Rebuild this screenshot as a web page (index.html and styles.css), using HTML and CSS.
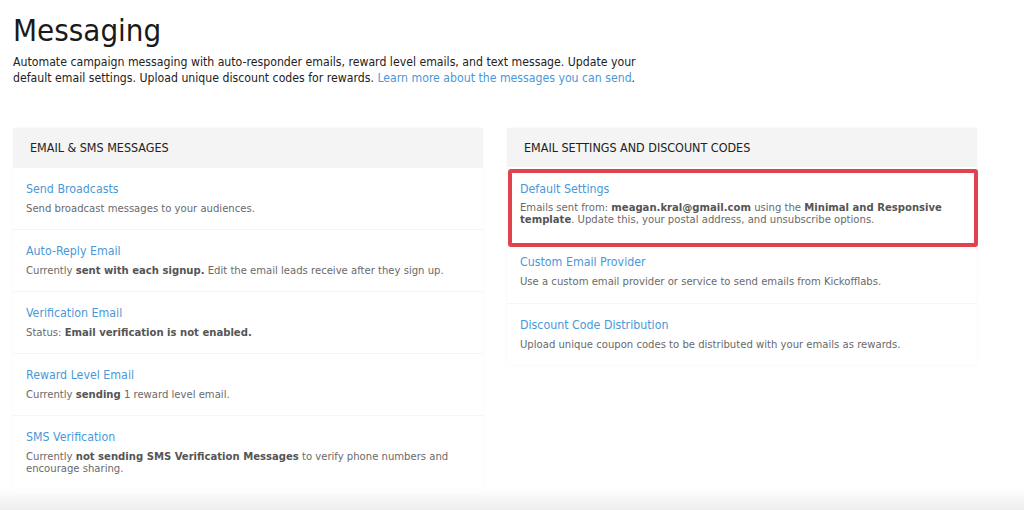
FILE: index.html
```html
<!DOCTYPE html>
<html lang="en">
<head>
   <meta charset="utf-8">
   <meta content="width=device-width, initial-scale=1.0" name="viewport">
   <title>Messaging</title>
   <link rel="stylesheet" href="styles.css">
</head>
<body>
   <div id="page">
      <h1 class="title">Messaging</h1>
      <p class="intro">
         Automate campaign messaging with auto-responder emails, reward level emails, and text message. Update your
         default email settings. Upload unique discount codes for rewards. <a href="#">Learn more about the messages you can send</a>.
      </p>

      <div class="panels">
         <div class="panel">
            <div class="panel-head">EMAIL &amp; SMS MESSAGES</div>
            <div class="item">
               <a href="#">Send Broadcasts</a>
               <p>Send broadcast messages to your audiences.</p>
            </div>
            <div class="item">
               <a href="#">Auto-Reply Email</a>
               <p>Currently <b>sent with each signup.</b> Edit the email leads receive after they sign up.</p>
            </div>
            <div class="item">
               <a href="#">Verification Email</a>
               <p>Status: <b>Email verification is not enabled.</b></p>
            </div>
            <div class="item">
               <a href="#">Reward Level Email</a>
               <p>Currently <b>sending</b> 1 reward level email.</p>
            </div>
            <div class="item">
               <a href="#">SMS Verification</a>
               <p>Currently <b>not sending SMS Verification Messages</b> to verify phone numbers and encourage sharing.</p>
            </div>
         </div>

         <div class="panel">
            <div class="panel-head">EMAIL SETTINGS AND DISCOUNT CODES</div>
            <div class="item highlight">
               <a href="#">Default Settings</a>
               <p>Emails sent from: <b>meagan.kral@gmail.com</b> using the <b>Minimal and Responsive template</b>. Update this, your postal address, and unsubscribe options.</p>
            </div>
            <div class="item">
               <a href="#">Custom Email Provider</a>
               <p>Use a custom email provider or service to send emails from Kickofflabs.</p>
            </div>
            <div class="item">
               <a href="#">Discount Code Distribution</a>
               <p>Upload unique coupon codes to be distributed with your emails as rewards.</p>
            </div>
         </div>
      </div>
   </div>
   <div class="fade"></div>
</body>
</html>
```

FILE: styles.css
```css
* {
    margin: 0;
    padding: 0;
    box-sizing: border-box;
}
body {
    font-family: "DejaVu Sans Condensed", "DejaVu Sans", Tahoma, sans-serif;
    font-stretch: condensed;
    color: #555;
    background: #fff;
    height: 510px;
    overflow: hidden;
}
a {
    color: #4a98d8;
    text-decoration: none;
}
#page {
    padding: 12px 13px 0;
}
.title {
    font-size: 31px;
    font-weight: normal;
    color: #1a1a1a;
    line-height: 36px;
}
.intro {
    margin-top: 6px;
    font-size: 12.2px;
    line-height: 16px;
    color: #222;
    width: 645px;
}
.panels {
    display: flex;
    gap: 24px;
    margin-top: 42px;
}
.panel {
    width: 470px;
    align-self: flex-start;
    background: #fff;
    box-shadow: 0 0 2px rgba(0, 0, 0, 0.05);
}
.panel-head {
    background: #f4f4f4;
    height: 39px;
    line-height: 40px;
    padding-left: 17px;
    font-size: 12.45px;
    color: #222;
}
.item {
    padding: 13px 13px 13px;
    border-top: 1px solid #f5f5f5;
    min-height: 62px;
}
.item a {
    display: block;
    font-size: 12.3px;
    line-height: 16px;
}
.item p {
    margin-top: 6px;
    font-size: 11.2px;
    line-height: 12px;
    color: #6a6a6a;
}
.item b {
    color: #555;
}
.highlight {
    border: 4px solid #e0434d;
    border-radius: 3px;
    padding: 8px 8px 16px;
    margin: 2px -1px -6px 1px;
    height: 78px;
}
.highlight + .item {
    border-top: 0;
}
.highlight p {
    margin-top: 5px;
}
.fade {
    position: fixed;
    left: 0;
    right: 0;
    bottom: 0;
    height: 22px;
    background: linear-gradient(to bottom, rgba(240, 240, 240, 0), #ededed);
}
```
